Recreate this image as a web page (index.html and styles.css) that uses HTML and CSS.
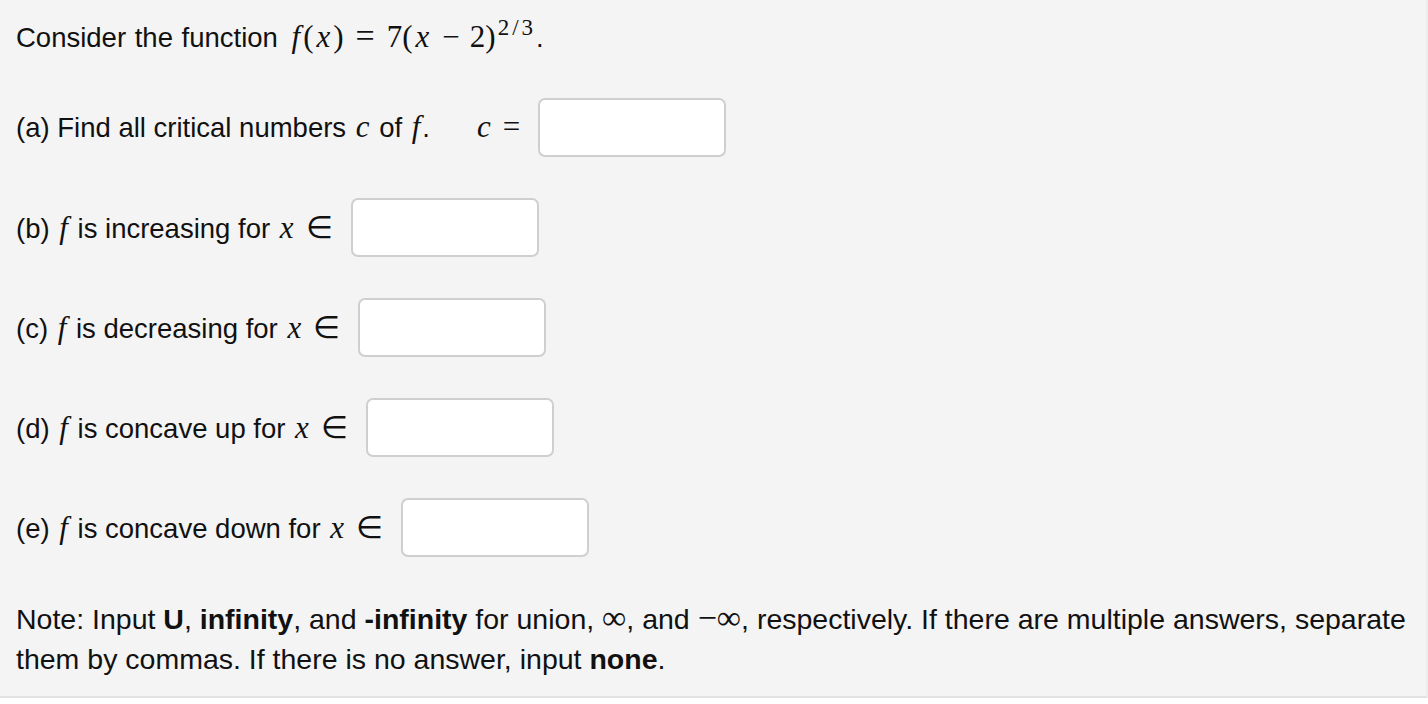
FILE: index.html
```html
<!DOCTYPE html>
<html>
<head>
<meta charset="utf-8">
<link rel="stylesheet" href="styles.css">
</head>
<body>
<div class="problem">
  <p class="intro">Consider the function <span class="m fn"><i>f</i>(<i>x</i>)<span class="rel">=</span>7(<i>x</i><span class="bin">−</span>2)<sup>2/3</sup></span>.</p>

  <div class="row">
    <span class="lbl">(a) Find all critical numbers <span class="m"><i>c</i></span> of <span class="m"><i>f</i></span>.</span>
    <span class="m eq"><i>c</i><span class="rel last">=</span></span>
    <span class="box"></span>
  </div>

  <div class="row">
    <span class="lbl">(b) <span class="m"><i>f</i></span> is increasing for <span class="m"><i>x</i><span class="rel last">∈</span></span></span>
    <span class="box"></span>
  </div>

  <div class="row">
    <span class="lbl">(c) <span class="m"><i>f</i></span> is decreasing for <span class="m"><i>x</i><span class="rel last">∈</span></span></span>
    <span class="box"></span>
  </div>

  <div class="row">
    <span class="lbl">(d) <span class="m"><i>f</i></span> is concave up for <span class="m"><i>x</i><span class="rel last">∈</span></span></span>
    <span class="box"></span>
  </div>

  <div class="row">
    <span class="lbl">(e) <span class="m"><i>f</i></span> is concave down for <span class="m"><i>x</i><span class="rel last">∈</span></span></span>
    <span class="box"></span>
  </div>

  <p class="note">Note: Input <b>U</b>, <b>infinity</b>, and <b>-infinity</b> for union, <span class="m inf">∞</span>, and <span class="m inf">−∞</span>, respectively. If there are multiple answers, separate them by commas. If there is no answer, input <b>none</b>.</p>
</div>
</body>
</html>
```

FILE: styles.css
```css
html, body {
  margin: 0;
  padding: 0;
  background: #ffffff;
}

.problem {
  background: #f4f4f4;
  border-bottom: 2px solid #e2e2e2;
  border-right: 2px solid #ececec;
  padding: 0 14px 16px 16px;
  font-family: "Liberation Sans", Arial, sans-serif;
  font-size: 27.5px;
  color: #111;
  height: 680px;
}

.intro {
  margin: 0;
  height: 77px;
  line-height: 74px;
  word-spacing: 1px;
}

.m {
  font-family: "Liberation Serif", "Times New Roman", serif;
  font-size: 31px;
  word-spacing: 0;
}

.m i {
  font-style: italic;
  padding: 0 2px;
}

.fn {
  margin-left: 2px;
}

.fn i {
  padding: 0 3px;
}

.fn .rel {
  padding: 0 12px;
  font-size: 34px;
  line-height: 0;
}

.rel {
  font-style: normal;
  padding: 0 10px;
}

.bin {
  padding: 0 10px;
}

.rel.last {
  padding-right: 0;
  padding-left: 10px;
}

sup {
  font-size: 23px;
  vertical-align: 12px;
  line-height: 0;
  padding-left: 2px;
  letter-spacing: 3px;
}

.row {
  display: flex;
  align-items: center;
  height: 100px;
  gap: 18px;
}

.eq {
  margin-left: 27px;
}

.box {
  width: 184px;
  height: 55px;
  border: 2px solid #cfcfcf;
  border-radius: 7px;
  background: #fff;
}

.note {
  margin: 22px 0 0 0;
  font-size: 28.5px;
  line-height: 40px;
}

.note .inf {
  font-size: 34px;
  line-height: 0;
}

.note b {
  font-weight: bold;
}
```
